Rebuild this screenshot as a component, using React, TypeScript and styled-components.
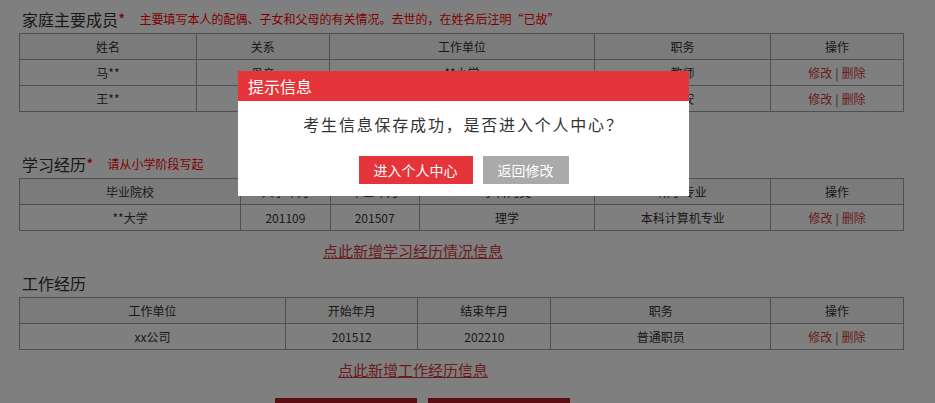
import {createGlobalStyle, styled} from 'styled-components';

const Global = createGlobalStyle`
  html, body {
    margin: 0;
    padding: 0;
    background: #fff;
  }
  body {
    font-family: "Noto Sans CJK SC", "Noto Sans", "Liberation Sans", sans-serif;
    color: #333;
    font-size: 12px;
  }
`;

const TABLE_W = 885;

const Page = styled.div`
  padding: 0 19px;
  width: ${TABLE_W}px;
`;

const SectionHead = styled.div<{$gap?: number}>`
  display: flex;
  align-items: center;
  height: 29px;
  margin-top: ${({$gap}) => $gap ?? 0}px;
  padding-top: ${({$gap}) => ($gap === undefined ? 4 : 0)}px;
  padding-left: 3px;
`;

const HeadTitle = styled.span`
  font-size: 16px;
  color: #333;
  line-height: 20px;
`;

const Star = styled.span`
  color: #f00;
  font-size: 16px;
  margin-right: 14px;
`;

const Note = styled.span`
  color: #f00;
  font-size: 12px;
`;

const Table = styled.table`
  width: ${TABLE_W}px;
  border-collapse: collapse;
  table-layout: fixed;
  font-size: 12px;
  color: #333;
`;

const Th = styled.th<{$w: number}>`
  width: ${({$w}) => ((100 * $w) / TABLE_W).toFixed(3)}%;
  height: 25px;
  padding: 0;
  border: 1px solid #a0a0a0;
  background: #f6f6f6;
  font-weight: normal;
  text-align: center;
`;

const Td = styled.td`
  height: 25px;
  padding: 0;
  border: 1px solid #a0a0a0;
  text-align: center;
`;

const Act = styled.a`
  color: #d63a3a;
  text-decoration: none;
`;

const Sep = styled.span`
  color: #555;
  margin: 0 3px;
`;

const LinkRow = styled.div`
  width: 788px;
  display: flex;
  justify-content: center;
  margin-top: 9px;
  line-height: 22px;
`;

const AddLink = styled.a`
  color: #d9363c;
  font-size: 15px;
  text-decoration: underline;
`;

const BottomBar = styled.div`
  width: 807px;
  display: flex;
  justify-content: center;
  gap: 11px;
  margin-top: 17px;
`;

const BigBtn = styled.button`
  width: 142px;
  height: 40px;
  border: none;
  background: #b51d29;
  color: #fff;
  font-size: 16px;
  font-family: inherit;
`;

const Mask = styled.div`
  position: fixed;
  inset: 0;
  background: rgba(0, 0, 0, 0.5);
`;

const Dialog = styled.div`
  position: fixed;
  left: 238px;
  top: 71px;
  width: 451px;
  background: #fff;
`;

const DialogHead = styled.div`
  height: 30px;
  background: #e5353a;
  color: #fff;
  font-size: 16px;
  line-height: 30px;
  padding-left: 10px;
`;

const DialogBody = styled.div`
  padding: 12px 0 12px;
  display: flex;
  flex-direction: column;
  align-items: center;
`;

const Message = styled.div`
  font-size: 16px;
  line-height: 22px;
  letter-spacing: 1.8px;
  color: #333;
`;

const BtnRow = styled.div`
  display: flex;
  gap: 10px;
  margin-top: 21px;
`;

const DlgBtn = styled.button<{$primary?: boolean}>`
  height: 28px;
  padding: 0;
  width: ${({$primary}) => ($primary ? 114 : 86)}px;
  border: none;
  background: ${({$primary}) => ($primary ? '#e5353a' : '#aaaaaa')};
  color: #fff;
  font-size: 14px;
  font-family: inherit;
`;

function Actions() {
  return (
    <Td>
      <Act>修改</Act>
      <Sep>|</Sep>
      <Act>删除</Act>
    </Td>
  );
}

type Col = {label: string; w: number};

function DataTable({cols, rows}: {cols: Col[]; rows: string[][]}) {
  return (
    <Table>
      <thead>
        <tr>
          {cols.map((c) => (
            <Th key={c.label} $w={c.w}>
              {c.label}
            </Th>
          ))}
        </tr>
      </thead>
      <tbody>
        {rows.map((r, i) => (
          <tr key={i}>
            {r.map((v, j) => (
              <Td key={j}>{v}</Td>
            ))}
            <Actions />
          </tr>
        ))}
      </tbody>
    </Table>
  );
}

const familyCols: Col[] = [
  {label: '姓名', w: 177},
  {label: '关系', w: 133},
  {label: '工作单位', w: 266},
  {label: '职务', w: 176},
  {label: '操作', w: 133},
];

const studyCols: Col[] = [
  {label: '毕业院校', w: 222},
  {label: '入学年月', w: 89},
  {label: '毕业年月', w: 89},
  {label: '学科门类', w: 176},
  {label: '所学专业', w: 176},
  {label: '操作', w: 133},
];

const workCols: Col[] = [
  {label: '工作单位', w: 267},
  {label: '开始年月', w: 132},
  {label: '结束年月', w: 133},
  {label: '职务', w: 220},
  {label: '操作', w: 133},
];

export default function App() {
  return (
    <>
      <Global />
      <Page>
        <SectionHead>
          <HeadTitle>家庭主要成员</HeadTitle>
          <Star>*</Star>
          <Note>主要填写本人的配偶、子女和父母的有关情况。去世的，在姓名后注明“已故”</Note>
        </SectionHead>
        <DataTable
          cols={familyCols}
          rows={[
            ['马**', '母亲', '**小学', '教师'],
            ['王**', '父亲', '**公安局', '公安'],
          ]}
        />

        <SectionHead $gap={37}>
          <HeadTitle>学习经历</HeadTitle>
          <Star>*</Star>
          <Note>请从小学阶段写起</Note>
        </SectionHead>
        <DataTable
          cols={studyCols}
          rows={[['**大学', '201109', '201507', '理学', '本科计算机专业']]}
        />
        <LinkRow>
          <AddLink>点此新增学习经历情况信息</AddLink>
        </LinkRow>

        <SectionHead $gap={6}>
          <HeadTitle>工作经历</HeadTitle>
        </SectionHead>
        <DataTable cols={workCols} rows={[['xx公司', '201512', '202210', '普通职员']]} />
        <LinkRow>
          <AddLink>点此新增工作经历信息</AddLink>
        </LinkRow>

        <BottomBar>
          <BigBtn>保存</BigBtn>
          <BigBtn>提交</BigBtn>
        </BottomBar>
      </Page>

      <Mask />
      <Dialog>
        <DialogHead>提示信息</DialogHead>
        <DialogBody>
          <Message>考生信息保存成功，是否进入个人中心？</Message>
          <BtnRow>
            <DlgBtn $primary>进入个人中心</DlgBtn>
            <DlgBtn>返回修改</DlgBtn>
          </BtnRow>
        </DialogBody>
      </Dialog>
    </>
  );
}
